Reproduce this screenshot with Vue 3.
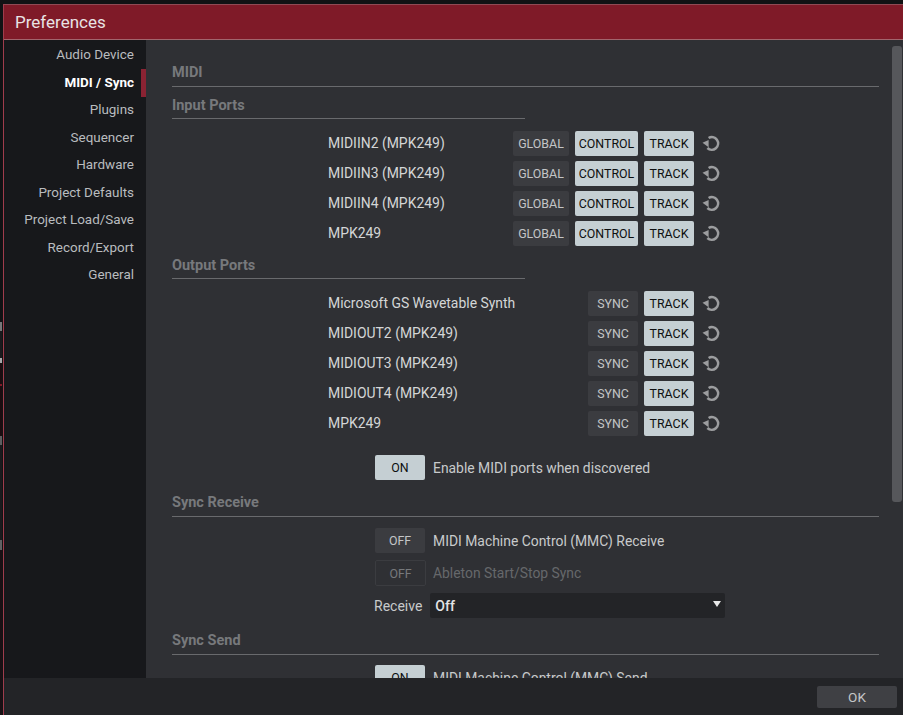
<script setup>
const nav = ['Audio Device', 'MIDI / Sync', 'Plugins', 'Sequencer', 'Hardware', 'Project Defaults', 'Project Load/Save', 'Record/Export', 'General']
const inputs = ['MIDIIN2 (MPK249)', 'MIDIIN3 (MPK249)', 'MIDIIN4 (MPK249)', 'MPK249']
const outputs = ['Microsoft GS Wavetable Synth', 'MIDIOUT2 (MPK249)', 'MIDIOUT3 (MPK249)', 'MIDIOUT4 (MPK249)', 'MPK249']
</script>

<template>
  <div class="screen">
    <div class="window">
      <header class="title">Preferences</header>
      <div class="middle">
        <nav class="nav">
          <div v-for="n in nav" :key="n" class="nav-item" :class="{ active: n === 'MIDI / Sync' }">{{ n }}</div>
        </nav>
        <main class="content">
          <div class="scrollbar"></div>
          <div class="scroll">
            <h2 class="head full first">MIDI</h2>
            <h2 class="head half second">Input Ports</h2>
            <div class="ports">
              <div v-for="p in inputs" :key="p" class="port">
                <span class="port-name">{{ p }}</span>
                <span class="btn w56 off">GLOBAL</span>
                <span class="btn w63 on">CONTROL</span>
                <span class="btn w50 on">TRACK</span>
                <svg class="reset" viewBox="0 0 19 18"><path d="M6.6 4A6.3 6.3 0 1 1 5.4 14" fill="none" stroke="currentColor" stroke-width="2.6"/><path d="M.5 8.8 6.6 6v7.2z" fill="currentColor"/></svg>
              </div>
            </div>
            <h2 class="head half third">Output Ports</h2>
            <div class="ports">
              <div v-for="p in outputs" :key="p" class="port">
                <span class="port-name wide">{{ p }}</span>
                <span class="btn w50 off">SYNC</span>
                <span class="btn w50 on">TRACK</span>
                <svg class="reset" viewBox="0 0 19 18"><path d="M6.6 4A6.3 6.3 0 1 1 5.4 14" fill="none" stroke="currentColor" stroke-width="2.6"/><path d="M.5 8.8 6.6 6v7.2z" fill="currentColor"/></svg>
              </div>
            </div>
            <div class="option discover"><span class="btn w50 on">ON</span><span class="opt-label">Enable MIDI ports when discovered</span></div>
            <h2 class="head full fourth">Sync Receive</h2>
            <div class="option mmc"><span class="btn w50 off">OFF</span><span class="opt-label">MIDI Machine Control (MMC) Receive</span></div>
            <div class="option ableton"><span class="btn w50 disabled">OFF</span><span class="opt-label dim">Ableton Start/Stop Sync</span></div>
            <div class="receive">
              <span class="recv-label">Receive</span>
              <div class="select"><span>Off</span><i class="caret"></i></div>
            </div>
            <h2 class="head full fifth">Sync Send</h2>
            <div class="option send"><span class="btn w50 on">ON</span><span class="opt-label">MIDI Machine Control (MMC) Send</span></div>
          </div>
        </main>
      </div>
      <footer class="footer"><span class="ok">OK</span></footer>
    </div>
  </div>
</template>

<style>
html, body { margin: 0; background: #111214; }
</style>

<style scoped>
.screen {
  width: 903px; height: 715px; padding: 4px 0 0 3px; box-sizing: border-box; overflow: hidden;
  font-family: Roboto, "Liberation Sans", sans-serif;
  background-color: #111214;
  background-image: linear-gradient(#111214 0 322px, #77787a 322px 331px, #1a1a1d 331px 358px, #a8a9ab 358px 363px, #1c0c10 363px 384px, #7f1a28 384px 386px, #1c0c10 386px 436px, #5d5e60 436px 445px, #1a1a1d 445px 540px, #606163 540px 550px, #1a1014 550px);
  background-size: 2px 100%;
  background-repeat: no-repeat;
}
.window { width: 900px; height: 711px; display: flex; flex-direction: column; border-left: 1px solid #a03c4c; box-sizing: border-box; }
.title { height: 36px; flex: none; box-sizing: border-box; background: #7f1a28; border-top: 1px solid #8f4a54; border-bottom: 1px solid #a2656d; color: #e9e3e4; font-size: 17px; line-height: 35px; padding-left: 11px; }
.middle { flex: 1; display: flex; min-height: 0; }
.nav { width: 142px; flex: none; background: #17181b; padding-top: 1px; }
.nav-item { height: 27.5px; line-height: 27.5px; text-align: right; padding-right: 12px; font-size: 13.45px; color: #b9bcbf; position: relative; }
.nav-item.active { color: #fff; font-weight: 700; }
.nav-item.active::after { content: ""; position: absolute; right: 0; top: 0; width: 5px; height: 28px; background: #8a2333; }
.content { flex: 1; position: relative; background: #2f3034; overflow: hidden; }
.scroll { padding: 0 20px 0 26px; }
.scrollbar { position: absolute; left: 746px; top: 6px; width: 10px; height: 456px; border-radius: 3px; background: #56575b; }
.head { margin: 0; font-size: 14.5px; font-weight: 700; color: #77797c; border-bottom: 1px solid #696a6d; height: 20px; line-height: 22px; box-sizing: content-box; }
.full { width: 707px; }
.half { width: 353px; }
.first { margin-top: 22px; padding-bottom: 4px; }
.second { margin-top: 8px; padding-bottom: 3px; }
.third { margin-top: 7px; padding-bottom: 3px; }
.fourth { margin-top: 12px; padding-bottom: 4px; }
.fifth { margin-top: 12px; padding-bottom: 4px; }
.ports { margin-top: 9px; }
.port { height: 30px; display: flex; align-items: center; gap: 6px; padding-left: 156px; }
.port-name { width: 179px; flex: none; font-size: 13.95px; line-height: 16px; color: #d4d6d7; }
.port-name.wide { width: 254px; }
.btn { height: 25px; box-sizing: border-box; border-radius: 2px; display: flex; align-items: center; justify-content: center; font-size: 12.4px; flex: none; }
.w50 { width: 50px; }
.w56 { width: 56px; }
.w63 { width: 63px; }
.on { background: #c5cfd3; color: #0d0f10; }
.off { background: #3b3c40; color: #c3c5c7; }
.disabled { background: #2f3034; color: #77797c; border: 1px solid #3b3c40; width: 51px; height: 26px; }
.reset { width: 19px; height: 18px; color: #9c9d9f; margin-left: 2px; flex: none; }
.option { display: flex; align-items: center; gap: 8px; padding-left: 203px; height: 25px; }
.opt-label { font-size: 13.9px; line-height: 16px; color: #c8cacb; }
.opt-label.dim { color: #66686b; margin-left: -1px; }
.discover { margin-top: 17px; }
.mmc { margin-top: 11px; }
.ableton { margin-top: 7px; height: 26px; }
.receive { display: flex; align-items: center; gap: 8px; height: 25px; margin-top: 7px; padding-left: 202px; }
.recv-label { font-size: 14px; line-height: 16px; color: #c8cacb; }
.select { width: 295px; height: 25px; box-sizing: border-box; background: #232427; border-radius: 2px; display: flex; align-items: center; justify-content: space-between; padding: 0 4px 0 5px; color: #e4e5e6; font-size: 14px; font-weight: 500; }
.caret { width: 0; height: 0; border-left: 4px solid transparent; border-right: 4px solid transparent; border-top: 6px solid #e8e8e8; margin-top: -3px; }
.send { margin-top: 10px; }
.footer { height: 37px; flex: none; background: #232427; display: flex; justify-content: flex-end; align-items: flex-start; padding: 8px 6px 0 0; box-sizing: border-box; }
.ok { width: 80px; height: 22px; border-radius: 2px; background: #3f4044; color: #c4c6c8; font-size: 13.5px; display: flex; align-items: center; justify-content: center; }
</style>
